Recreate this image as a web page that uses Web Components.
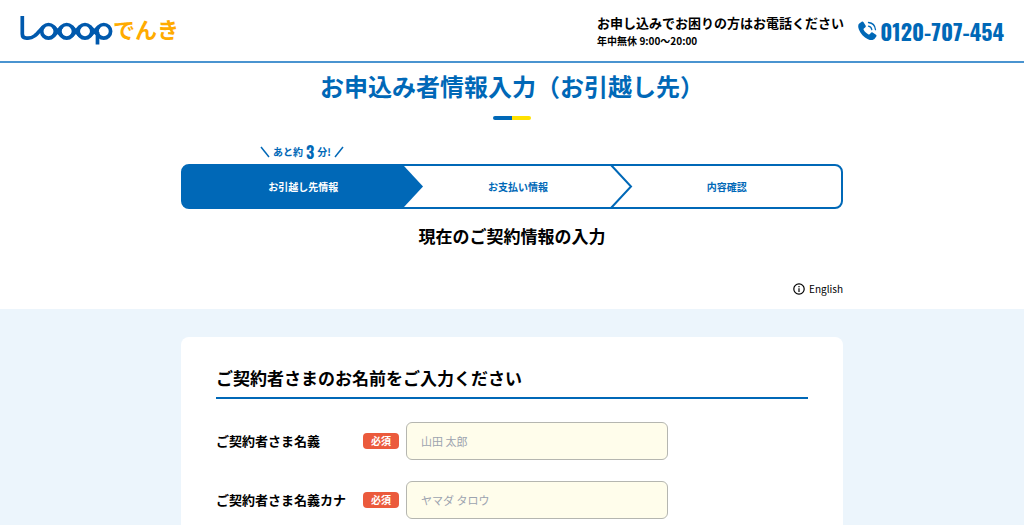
<!DOCTYPE html>
<html lang="ja">
<head>
<meta charset="utf-8">
<meta name="viewport" content="width=device-width, initial-scale=1">
<title>お申込み者情報入力 | Looopでんき</title>
<style>
  :root { --blue: #0068b7; --pale: #ecf5fc; --red: #eb5a3c; --digits: Oswald, "Roboto Condensed", "Open Sans Condensed", Roboto, sans-serif; }
  body { margin: 0; background: #fff; color: #000; font-family: "Noto Sans CJK JP", "Noto Sans", sans-serif; font-size: 12px; }
</style>
</head>
<body>
<apply-page></apply-page>

<template id="t-logo">
  <style>
    :host { display: block; }
    a { display: flex; align-items: center; text-decoration: none; color: #ffab00; }
    svg { display: block; flex: none; }
    span { font-size: 22px; line-height: 28px; font-weight: 700; margin-bottom: 5px; }
  </style>
  <a href="#" aria-label="Looopでんき">
    <svg width="93" height="33" viewBox="20 14 93 33" fill="none" stroke="#0059ad" stroke-width="3.700" aria-hidden="true">
      <path d="M22.300 16V34C22.300 36.800 24 38.100 26.500 38.100H28C34.500 38.100 37.500 33 43.400 26.800"/>
      <circle cx="48.500" cy="31.300" r="6.800"/><circle cx="66.700" cy="31.300" r="6.800"/><circle cx="85" cy="31.300" r="6.800"/><circle cx="103.800" cy="31.300" r="6.800"/>
      <path d="M53.600 26.800L61.600 35.800M53.600 35.800L61.600 26.800M71.800 26.800L79.900 35.800M71.800 35.800L79.900 26.800M90 26.800L98.700 35.800M90 35.800L98.700 26.800M97.500 32V44.500"/>
    </svg><span>でんき</span>
  </a>
</template>

<template id="t-header">
  <style>
    :host { display: block; border-bottom: 2px solid #4a94d0; }
    header { display: flex; align-items: center; justify-content: space-between; height: 61px; padding: 0 20px; }
    .contact { display: flex; align-items: center; gap: 14px; }
    p { margin: 0; font-weight: 700; white-space: nowrap; }
    .lead { font-size: 13px; line-height: 20px; }
    .hours { font-size: 10px; line-height: 16px; }
    .tel { display: flex; align-items: center; gap: 3px; color: var(--blue); text-decoration: none; font: 700 22px/32px var(--digits); white-space: nowrap; }
    svg { flex: none; }
  </style>
  <header>
    <loop-logo></loop-logo>
    <div class="contact">
      <div><p class="lead">お申し込みでお困りの方はお電話ください</p><p class="hours">年中無休 9:00〜20:00</p></div>
      <a class="tel" href="tel:0120707454">
        <svg width="19" height="20" viewBox="0 0 19 20" aria-hidden="true">
          <path fill="#0068b7" d="M1.300 2.500L3.700.8C4.300.4 5 .5 5.400 1.100L7.600 4.500C8 5.100 7.900 5.800 7.400 6.200L5.900 7.400C5.400 7.800 5.500 8.400 5.800 9C7 11 8.500 12.400 10.500 13.400C11 13.700 11.600 13.600 12 13.100L12.900 11.700C13.300 11.100 14 11 14.600 11.400L18 13.700C18.600 14.100 18.700 14.800 18.300 15.400L16.800 17.600C15.600 19.300 12.900 19.600 10 18.200C5.800 16.200 2.500 12.600.9 8.400C-.1 5.800-.1 3.600 1.300 2.500Z"/>
          <g fill="none" stroke="#0068b7" stroke-width="1.300" stroke-linecap="round"><path d="M10.500 5.200C12.300 5.600 13.500 6.900 13.800 8.700"/><path d="M10.500 1.500C14.400 1.900 17.100 4.700 17.500 8.700"/></g>
        </svg><span>0120-707-454</span>
      </a>
    </div>
  </header>
</template>

<template id="t-title">
  <style>
    :host { display: block; text-align: center; }
    h1 { margin: 0; font-size: 24px; line-height: 36px; font-weight: 700; color: var(--blue); }
    i { display: block; width: 38px; height: 4px; margin: 12px auto 0; border-radius: 2px; background: linear-gradient(90deg, var(--blue) 50%, #ffe100 50%); }
  </style>
  <h1><slot></slot></h1><i></i>
</template>

<template id="t-steps">
  <style>
    :host { display: block; color: var(--blue); font-weight: 700; font-size: 10px; line-height: 20px; }
    .note, ol { display: grid; grid-template-columns: 222fr 210fr 230fr; }
    .remain { display: flex; justify-content: center; align-items: center; gap: 3px; padding-left: 20px; height: 24px; white-space: nowrap; }
    .remain b { font: 700 16px/20px var(--digits); }
    ol { list-style: none; margin: 0; padding: 0; height: 45px; box-sizing: border-box; border: 2px solid var(--blue); border-radius: 8px; }
    li { position: relative; display: flex; align-items: center; justify-content: center; padding-left: 20px; }
    li:last-child { padding-left: 0; }
    .on { background: var(--blue); color: #fff; border-radius: 4px 0 0 4px; }
    li svg { position: absolute; left: 100%; top: 0; width: 20px; height: 100%; z-index: 1; overflow: visible; }
  </style>
  <div class="note"><div class="remain">
    <svg width="10" height="12" viewBox="0 0 10 12" fill="none" stroke="#0068b7" stroke-width="1.500" aria-hidden="true"><path d="M1 1l8 10"/></svg>
    <span>あと約</span><b>3</b><span>分!</span>
    <svg width="10" height="12" viewBox="0 0 10 12" fill="none" stroke="#0068b7" stroke-width="1.500" aria-hidden="true"><path d="M9 1L1 11"/></svg>
  </div></div>
  <ol>
    <li class="on" aria-current="step">お引越し先情報<svg viewBox="0 0 20 41" preserveAspectRatio="none" aria-hidden="true"><path fill="#0068b7" d="M-1 0H0L19 20.500L0 41H-1Z"/></svg></li>
    <li>お支払い情報<svg viewBox="0 0 20 41" preserveAspectRatio="none" aria-hidden="true"><path fill="none" stroke="#0068b7" stroke-width="2" d="M-1 -1L19 20.500L-1 42"/></svg></li>
    <li>内容確認</li>
  </ol>
</template>

<template id="t-field">
  <style>
    :host { display: grid; grid-template-columns: 140px 36px minmax(0, 262px); column-gap: 7px; align-items: center; }
    label { font-size: 13px; line-height: 20px; font-weight: 700; white-space: nowrap; }
    .req { height: 16px; border-radius: 4px; background: var(--red); color: #fff; font-size: 10px; line-height: 16px; font-weight: 700; text-align: center; }
    input { box-sizing: border-box; width: 100%; height: 38px; margin: 0; padding: 0 14px; border: 1px solid #b5b6b0; border-radius: 6px; background: #fffdeb; color: #000; font: 400 11px/20px "Noto Sans CJK JP", sans-serif; }
    input::placeholder { color: #9ca3af; opacity: 1; }
  </style>
  <label for="field"></label><span class="req">必須</span><input id="field" type="text" required>
</template>

<template id="t-card">
  <style>
    :host { display: block; box-sizing: border-box; background: #fff; border-radius: 8px; padding: 27px 35px 40px; }
    h3 { margin: 0 0 23px; padding-bottom: 5px; border-bottom: 2px solid var(--blue); font-size: 17px; line-height: 28px; font-weight: 700; }
    form { display: grid; gap: 21px; }
  </style>
  <h3><slot name="heading"></slot></h3>
  <form><slot></slot></form>
</template>

<template id="t-page">
  <style>
    :host { display: block; }
    .col { max-width: 662px; margin: 0 auto; }
    page-title { padding-top: 5px; }
    step-bar { margin-top: 20px; }
    h2 { margin: 13px 0 0; font-size: 17px; line-height: 28px; font-weight: 700; text-align: center; }
    .lang { display: flex; justify-content: flex-end; margin-top: 29px; padding-bottom: 10px; }
    .lang a { display: flex; align-items: center; gap: 4px; font-size: 10px; line-height: 20px; color: #000; text-decoration: none; }
    section { background: var(--pale); padding: 28px 0 40px; }
  </style>
  <site-header></site-header>
  <main>
    <div class="col">
      <page-title>お申込み者情報入力（お引越し先）</page-title>
      <step-bar></step-bar>
      <h2>現在のご契約情報の入力</h2>
      <div class="lang"><a href="#en"><svg width="12" height="12" viewBox="0 0 12 12" aria-hidden="true"><circle cx="6" cy="6" r="5.200" fill="none" stroke="#000" stroke-width="1.200"/><path d="M6 5.200V9M6 3V4.200" stroke="#000" stroke-width="1.200"/></svg><span>English</span></a></div>
    </div>
    <section><form-card class="col">
      <span slot="heading">ご契約者さまのお名前をご入力ください</span>
      <text-field label="ご契約者さま名義" placeholder="山田 太郎"></text-field>
      <text-field label="ご契約者さま名義カナ" placeholder="ヤマダ タロウ"></text-field>
    </form-card></section>
  </main>
</template>

<script>
  class TemplateElement extends HTMLElement {
    constructor() {
      super();
      this.attachShadow({ mode: "open" }).append(document.getElementById(this.constructor.template).content.cloneNode(true));
    }
  }
  class LoopLogo extends TemplateElement { static template = "t-logo"; }
  class SiteHeader extends TemplateElement { static template = "t-header"; }
  class PageTitle extends TemplateElement { static template = "t-title"; }
  class StepBar extends TemplateElement { static template = "t-steps"; }
  class FormCard extends TemplateElement { static template = "t-card"; }
  class ApplyPage extends TemplateElement { static template = "t-page"; }
  class TextField extends TemplateElement {
    static template = "t-field";
    connectedCallback() {
      this.shadowRoot.querySelector("label").textContent = this.getAttribute("label");
      this.shadowRoot.querySelector("input").placeholder = this.getAttribute("placeholder");
    }
  }
  customElements.define("loop-logo", LoopLogo);
  customElements.define("site-header", SiteHeader);
  customElements.define("page-title", PageTitle);
  customElements.define("step-bar", StepBar);
  customElements.define("text-field", TextField);
  customElements.define("form-card", FormCard);
  customElements.define("apply-page", ApplyPage);
</script>
</body>
</html>
